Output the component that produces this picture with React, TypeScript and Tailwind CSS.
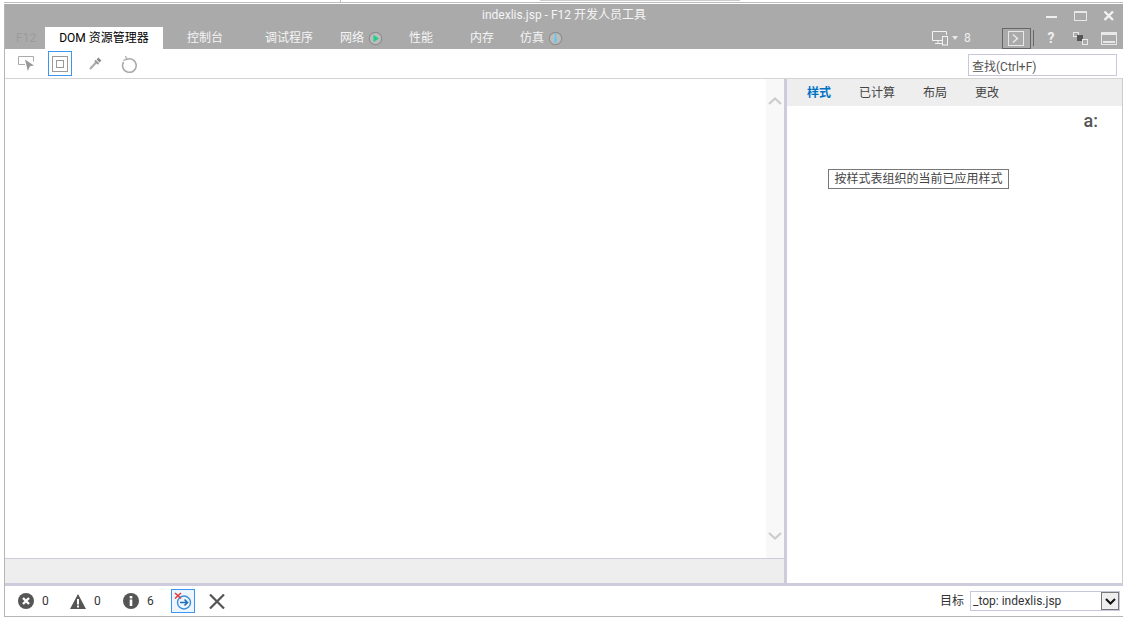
import type { ReactNode } from "react";

const font = "font-['Roboto','Noto_Sans_CJK_SC',sans-serif]";

const Minimize = () => (
  <svg width="12" height="12" viewBox="0 0 12 12"><rect x="0" y="6" width="11" height="2" fill="#eee" /></svg>
);
const Maximize = () => (
  <svg width="13" height="12" viewBox="0 0 13 12" fill="none"><rect x="0.5" y="1.5" width="12" height="9" stroke="#e8e8e8" /><rect x="0" y="1" width="13" height="2" fill="#e8e8e8" /></svg>
);
const Close = () => (
  <svg width="12" height="12" viewBox="0 0 12 12" fill="none"><path d="M1.5 1.5l8.5 8.5M10 1.5L1.5 10" stroke="#f2f2f2" strokeWidth="2.4" /></svg>
);

const PlayBadge = () => (
  <svg width="15" height="15" viewBox="0 0 15 15"><circle cx="7.5" cy="7.5" r="6.2" fill="#bdbdbd" stroke="#8e8e8e" strokeWidth="1.2" /><path d="M5.5 3.8l5.4 3.7-5.4 3.7z" fill="#1fd08a" /></svg>
);
const InfoBadge = () => (
  <svg width="15" height="15" viewBox="0 0 15 15"><circle cx="7.5" cy="7.5" r="6.2" fill="#bdbdbd" stroke="#8e8e8e" strokeWidth="1.2" /><rect x="6.6" y="2.8" width="1.8" height="1.8" fill="#45cbf5" /><rect x="6.6" y="5.6" width="1.8" height="6" fill="#45cbf5" /></svg>
);

const DeviceIcon = () => (
  <svg width="17" height="16" viewBox="0 0 17 16" fill="none">
    <path d="M11 10.5H.5V1.5h14V5" stroke="#f2f2f2" />
    <path d="M3 13.5h7M6 11v2" stroke="#f2f2f2" />
    <rect x="10.5" y="6.5" width="5" height="8.5" fill="#aaa" stroke="#f2f2f2" />
  </svg>
);

const ConsoleIcon = () => (
  <svg width="17" height="15" viewBox="0 0 17 15" fill="none">
    <rect x="0.5" y="0.5" width="15" height="14" stroke="#e8e8e8" />
    <path d="M5 3.5l4.5 4-4.5 4" stroke="#e8e8e8" strokeWidth="1.5" />
  </svg>
);

const HelpIcon = () => (
  <span className="w-[10px] text-center text-[14px] leading-none font-bold text-[#eee]">?</span>
);

const LayersIcon = () => (
  <svg width="15" height="13" viewBox="0 0 15 13">
    <rect x="0.5" y="0.5" width="5" height="4" fill="none" stroke="#e8e8e8" />
    <rect x="4" y="3" width="6" height="6" fill="#555" />
    <rect x="9.5" y="7.5" width="5" height="5" fill="none" stroke="#e8e8e8" />
  </svg>
);

const DockIcon = () => (
  <svg width="16" height="13" viewBox="0 0 16 13" fill="none">
    <rect x="0.5" y="0.5" width="15" height="12" stroke="#e8e8e8" />
    <rect x="1" y="1" width="14" height="2" fill="#e8e8e8" />
    <rect x="2" y="9" width="12" height="2" fill="#e8e8e8" />
  </svg>
);

const SelectIcon = () => (
  <svg width="17" height="17" viewBox="0 0 17 17" fill="none">
    <path d="M7 9.5H.5v-8h15v5" stroke="#aaa" />
    <path d="M7 4.5l9 6-4 .8-2.2 4.7z" fill="#999" />
  </svg>
);

const BoxIcon = () => (
  <svg width="16" height="16" viewBox="0 0 16 16" fill="none">
    <rect x="0.5" y="0.5" width="15" height="15" stroke="#999" />
    <rect x="4.5" y="4.5" width="7" height="7" stroke="#999" />
  </svg>
);

const PickerIcon = () => (
  <svg width="13" height="13" viewBox="0 0 13 13" fill="none">
    <path d="M1 12l6.5-7" stroke="#aaa" strokeWidth="2" />
    <path d="M6 3.5l3.5 3.5" stroke="#999" strokeWidth="2" />
    <path d="M8.5 1.5l3 3" stroke="#888" strokeWidth="2.5" />
  </svg>
);

const RefreshIcon = () => (
  <svg width="17" height="18" viewBox="0 0 17 18" fill="none">
    <path d="M5.5 4.4A6.8 6.8 0 1 1 2.6 7" stroke="#aaa" strokeWidth="1.6" />
    <path d="M4.5 1l1.2 3.4-3.4 1" stroke="#aaa" strokeWidth="1.2" />
  </svg>
);

const ErrorIcon = () => (
  <svg width="16" height="16" viewBox="0 0 16 16">
    <circle cx="8" cy="8" r="8" fill="#555" />
    <path d="M5 5l6 6M11 5l-6 6" stroke="#fff" strokeWidth="2.4" />
  </svg>
);
const WarnIcon = () => (
  <svg width="16" height="15" viewBox="0 0 16 15">
    <path d="M8 0l8 15H0z" fill="#555" />
    <rect x="7" y="5" width="2" height="5.5" fill="#fff" />
    <rect x="7" y="11.5" width="2" height="2" fill="#fff" />
  </svg>
);
const InfoIcon = () => (
  <svg width="16" height="16" viewBox="0 0 16 16">
    <circle cx="8" cy="8" r="8" fill="#555" />
    <rect x="6.7" y="3" width="2.6" height="2.4" fill="#fff" />
    <rect x="6.7" y="6.5" width="2.6" height="6.5" fill="#fff" />
  </svg>
);
const ClearOnNavIcon = () => (
  <svg width="18" height="18" viewBox="0 0 18 18" fill="none">
    <circle cx="10" cy="10.5" r="6.5" stroke="#3a8fd8" strokeWidth="1.4" />
    <path d="M6 10.5h7.5M10.5 7.5l3 3-3 3" stroke="#1f6fb8" strokeWidth="1.6" />
    <path d="M1 1l6 5.5M7 1L1 6.5" stroke="#e23b3b" strokeWidth="1.6" />
  </svg>
);
const ClearIcon = () => (
  <svg width="16" height="15" viewBox="0 0 16 15" fill="none"><path d="M1 .5l14 14M15 .5l-14 14" stroke="#555" strokeWidth="2.2" /></svg>
);

const Chevron = ({ up }: { up?: boolean }) => (
  <svg width="14" height="8" viewBox="0 0 14 8" fill="none">
    <path d={up ? "M1 7l6-5.5L13 7" : "M1 1l6 5.5L13 1"} stroke="#ccc" strokeWidth="2.2" />
  </svg>
);

const tabs: { label: string; width: string; icon?: ReactNode }[] = [
  { label: "控制台", width: "w-[78px]" },
  { label: "调试程序", width: "w-[75px]" },
  { label: "网络", width: "w-[69px]", icon: <PlayBadge /> },
  { label: "性能", width: "w-[61px]" },
  { label: "内存", width: "w-[50px]" },
  { label: "仿真", width: "w-[60px]", icon: <InfoBadge /> },
];

const Status = ({ icon, count, width }: { icon: ReactNode; count: number; width: string }) => (
  <div className={`flex items-center ${width}`}>
    {icon}
    <span className="ml-2 text-[12px] text-[#333]">{count}</span>
  </div>
);

export default function App() {
  return (
    <div className={`flex h-[617px] w-[1127px] flex-col overflow-hidden bg-white pr-[4px] pl-[4px] text-[12px] ${font}`}>
      {/* bits of the page behind the tools window */}
      <div className="-mr-[4px] flex h-[2px] shrink-0">
        <div className="ml-[336px] h-[2px] w-px bg-[#bbb]" />
        <div className="ml-[199px] h-px w-[200px] bg-[#ccc]" />
      </div>
      <div className="h-px shrink-0 bg-[#bdbdbd]" />
      <div className="h-px shrink-0 bg-white" />

      <div className="flex min-h-0 flex-1 flex-col border-b border-l border-[#b5b5b5]">
        {/* Title bar */}
        <header className="flex h-[45px] shrink-0 flex-col bg-[#aaaaaa] text-white">
          <div className="flex h-[23px] items-center">
            <div className="w-[140px]" />
            <div className="flex-1 pb-[2px] text-center text-[12px] leading-none text-[#f5f5f5]">indexlis.jsp - F12 开发人员工具</div>
            <div className="flex w-[140px] items-center pl-[63px]">
              <Minimize />
              <div className="ml-[16px]"><Maximize /></div>
              <div className="ml-[16px]"><Close /></div>
            </div>
          </div>
          <div className="flex h-[22px] items-center">
            <div className="w-[40px] shrink-0 pl-[11px] text-[#9b9b9b]">F12</div>
            <div className="flex h-full w-[118px] shrink-0 items-center justify-center bg-white text-[12px] text-black">DOM 资源管理器</div>
            <div className="flex shrink-0 pl-[24px]">
              {tabs.map((t) => (
                <div key={t.label} className={`flex shrink-0 items-center gap-1 ${t.width} text-[#f5f5f5]`}>
                  {t.label}
                  {t.icon}
                </div>
              ))}
            </div>
            <div className="ml-[352px] flex h-full shrink-0 items-center text-[#eee]">
              <DeviceIcon />
              <svg className="ml-[3px]" width="6" height="4" viewBox="0 0 6 4"><path d="M0 0h6L3 4z" fill="#e8e8e8" /></svg>
              <span className="ml-[6px] w-[38px]">8</span>
              <div className="flex h-[21px] w-[29px] items-center justify-center border border-[#666]">
                <ConsoleIcon />
              </div>
              <div className="ml-[2px] h-[16px] w-px bg-[#666]" />
              <div className="ml-[12px] flex items-center">
                <HelpIcon />
                <div className="ml-[17px]"><LayersIcon /></div>
                <div className="ml-[13px]"><DockIcon /></div>
              </div>
            </div>
          </div>
        </header>

        {/* Toolbar */}
        <div className="flex h-[30px] shrink-0 items-center border-b border-[#d4d4d4] pl-[13px]">
          <SelectIcon />
          <div className="ml-[13px] flex h-[25px] w-[24px] items-center justify-center border border-[#3c96f0]">
            <BoxIcon />
          </div>
          <div className="ml-[17px]"><PickerIcon /></div>
          <div className="ml-[19px]"><RefreshIcon /></div>
          <input
            readOnly
            value="查找(Ctrl+F)"
            className="mt-[3px] ml-[830px] h-[22px] w-[149px] border border-[#c8c8dc] px-[3px] text-[12px] text-[#555] outline-none"
          />
        </div>

        {/* Panels */}
        <div className="flex min-h-0 flex-1 border-b-[3px] border-[#ccccdc]">
          <div className="flex w-[779px] flex-col">
            <div className="flex flex-1 justify-end">
              <div className="flex w-[18px] flex-col items-center justify-between bg-[#f8f8f8] pt-[18px] pb-[18px]">
                <Chevron up />
                <Chevron />
              </div>
            </div>
            <div className="h-[25px] border-t border-[#ccccdc] bg-[#eeeeee]" />
          </div>
          <div className="w-[3px] bg-[#ccccdc]" />
          <div className="flex flex-1 flex-col border-r border-[#ccc]">
            <div className="flex h-[27px] shrink-0 items-center bg-[#eeeeee] pt-px pl-[20px] text-[#444]">
              <span className="w-[52px] font-bold text-[#0072c6]">样式</span>
              <span className="w-[64px]">已计算</span>
              <span className="w-[52px]">布局</span>
              <span>更改</span>
            </div>
            <div className="flex justify-end pt-[3px] pr-[24px]">
              <span className="text-[18px] leading-[24px] font-medium text-[#555]">a:</span>
            </div>
            <div className="mt-[36px] ml-[41px] flex h-[20px] w-[181px] items-center justify-center border border-[#777] text-[12px] text-[#444]">
              按样式表组织的当前已应用样式
            </div>
          </div>
        </div>

        {/* Status bar */}
        <footer className="flex h-[30px] shrink-0 items-center pl-[13px] text-[#333]">
          <Status icon={<ErrorIcon />} count={0} width="w-[52px]" />
          <Status icon={<WarnIcon />} count={0} width="w-[53px]" />
          <Status icon={<InfoIcon />} count={6} width="w-[48px]" />
          <div className="flex h-[24px] w-[24px] items-center justify-center border border-[#3c96f0] bg-[#eef6fd]">
            <ClearOnNavIcon />
          </div>
          <div className="ml-[14px]"><ClearIcon /></div>
          <span className="ml-[715px] text-[#333]">目标</span>
          <div className="ml-[6px] flex h-[20px] w-[150px] items-center justify-between border border-[#c8c8dc] pl-[2px] text-[#333]">
            <span>_top: indexlis.jsp</span>
            <div className="flex h-full w-[18px] items-center justify-center border border-[#777] bg-[#eee]">
              <svg width="11" height="7" viewBox="0 0 11 7" fill="none"><path d="M1 1l4.5 4.5L10 1" stroke="#111" strokeWidth="2" /></svg>
            </div>
          </div>
        </footer>
      </div>
    </div>
  );
}
